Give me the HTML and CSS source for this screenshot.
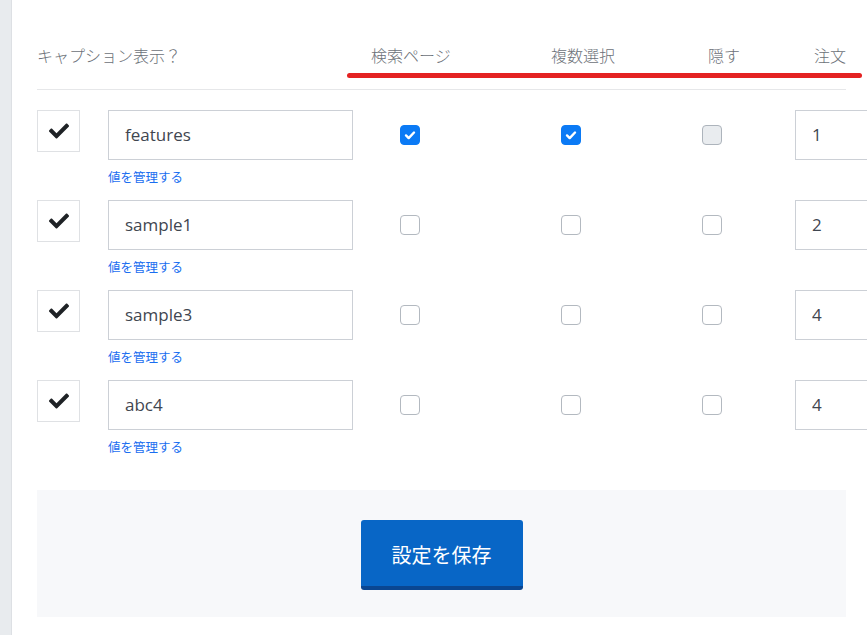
FILE: index.html
```html
<!DOCTYPE html>
<html lang="ja">
<head>
    <meta charset="UTF-8">
    <meta name="viewport" content="width=device-width, initial-scale=1.0">
    <title>カスタムフィールド設定</title>
    <link rel="stylesheet" href="styles.css">
</head>
<body>
    <div class="layout">
        <aside class="sidebar"></aside>

        <main class="panel">
            <!-- Column headings -->
            <div class="fields-head">
                <span>キャプション表示？</span>
                <span>検索ページ</span>
                <span>複数選択</span>
                <span>隠す</span>
                <span>注文</span>
                <span class="mark"></span>
            </div>

            <!-- Field rows -->
            <div class="field-row">
                <div class="caption-toggle">
                    <svg width="20" height="20" viewBox="0 0 512 512"><path d="M173.9 439.4l-166.4-166.4c-10-10-10-26.2 0-36.2l36.2-36.2c10-10 26.2-10 36.2 0L192 312.7 432.1 72.6c10-10 26.2-10 36.2 0l36.2 36.2c10 10 10 26.2 0 36.2l-294.4 294.4c-10 10-26.2 10-36.2 0z"/></svg>
                </div>
                <div class="name-cell">
                    <input type="text" class="name-input" value="features">
                    <a href="#" class="manage-link">値を管理する</a>
                </div>
                <div class="opt"><span class="tick on"><svg width="20" height="20" viewBox="0 0 20 20"><path d="M6 10.4l2.7 2.7 5.3-5.6"/></svg></span></div>
                <div class="opt"><span class="tick on"><svg width="20" height="20" viewBox="0 0 20 20"><path d="M6 10.4l2.7 2.7 5.3-5.6"/></svg></span></div>
                <div class="opt"><span class="tick off"></span></div>
                <div class="order-cell"><input type="text" class="order-input" value="1"></div>
            </div>

            <div class="field-row">
                <div class="caption-toggle">
                    <svg width="20" height="20" viewBox="0 0 512 512"><path d="M173.9 439.4l-166.4-166.4c-10-10-10-26.2 0-36.2l36.2-36.2c10-10 26.2-10 36.2 0L192 312.7 432.1 72.6c10-10 26.2-10 36.2 0l36.2 36.2c10 10 10 26.2 0 36.2l-294.4 294.4c-10 10-26.2 10-36.2 0z"/></svg>
                </div>
                <div class="name-cell">
                    <input type="text" class="name-input" value="sample1">
                    <a href="#" class="manage-link">値を管理する</a>
                </div>
                <div class="opt"><span class="tick"></span></div>
                <div class="opt"><span class="tick"></span></div>
                <div class="opt"><span class="tick"></span></div>
                <div class="order-cell"><input type="text" class="order-input" value="2"></div>
            </div>

            <div class="field-row">
                <div class="caption-toggle">
                    <svg width="20" height="20" viewBox="0 0 512 512"><path d="M173.9 439.4l-166.4-166.4c-10-10-10-26.2 0-36.2l36.2-36.2c10-10 26.2-10 36.2 0L192 312.7 432.1 72.6c10-10 26.2-10 36.2 0l36.2 36.2c10 10 10 26.2 0 36.2l-294.4 294.4c-10 10-26.2 10-36.2 0z"/></svg>
                </div>
                <div class="name-cell">
                    <input type="text" class="name-input" value="sample3">
                    <a href="#" class="manage-link">値を管理する</a>
                </div>
                <div class="opt"><span class="tick"></span></div>
                <div class="opt"><span class="tick"></span></div>
                <div class="opt"><span class="tick"></span></div>
                <div class="order-cell"><input type="text" class="order-input" value="4"></div>
            </div>

            <div class="field-row">
                <div class="caption-toggle">
                    <svg width="20" height="20" viewBox="0 0 512 512"><path d="M173.9 439.4l-166.4-166.4c-10-10-10-26.2 0-36.2l36.2-36.2c10-10 26.2-10 36.2 0L192 312.7 432.1 72.6c10-10 26.2-10 36.2 0l36.2 36.2c10 10 10 26.2 0 36.2l-294.4 294.4c-10 10-26.2 10-36.2 0z"/></svg>
                </div>
                <div class="name-cell">
                    <input type="text" class="name-input" value="abc4">
                    <a href="#" class="manage-link">値を管理する</a>
                </div>
                <div class="opt"><span class="tick"></span></div>
                <div class="opt"><span class="tick"></span></div>
                <div class="opt"><span class="tick"></span></div>
                <div class="order-cell"><input type="text" class="order-input" value="4"></div>
            </div>

            <div class="form-footer">
                <button type="button" class="save-btn">設定を保存</button>
            </div>
        </main>
    </div>
</body>
</html>
```

FILE: styles.css
```css
body {
    margin: 0;
    padding: 0;
    overflow: hidden;
    background-color: #ffffff;
    font-family: "Open Sans", "Noto Sans CJK JP", sans-serif;
    color: #444b55;
}

.layout {
    display: flex;
    height: 100vh;
}

.sidebar {
    width: 11px;
    flex-shrink: 0;
    background-color: #e8ebee;
    border-right: 1px solid #dde0e4;
}

.panel {
    flex: 1;
    min-width: 0;
    overflow: hidden;
    padding: 43px 0 0 25px;
}

.panel > div {
    width: 809px;
}

/* heading row */
.fields-head {
    position: relative;
    display: grid;
    grid-template-columns: 334px 180px 157px 106px auto;
    padding-bottom: 22px;
    border-bottom: 1px solid #e6e7e9;
    font-family: "Noto Sans CJK JP", sans-serif;
    font-weight: 300;
    font-size: 16px;
    line-height: 24px;
    color: #6c7178;
    white-space: nowrap;
}

/* red marker drawn over the headings */
.fields-head .mark {
    position: absolute;
    left: 310px;
    top: 30px;
    width: 515px;
    height: 5px;
    border-radius: 3px;
    background-color: #e42222;
}

.field-row {
    display: grid;
    grid-template-columns: 71px 245px 114px 208px 74px 1fr;
    align-items: start;
    margin-top: 20px;
}

.field-row + .field-row {
    margin-top: 14px;
}

.caption-toggle {
    width: 43px;
    height: 42px;
    box-sizing: border-box;
    border: 1px solid #dfe1e4;
    display: flex;
    align-items: center;
    justify-content: center;
}

.caption-toggle svg {
    fill: #1f2226;
    margin-top: -1px;
}

.name-cell {
    display: flex;
    flex-direction: column;
}

.name-input,
.order-input {
    height: 50px;
    box-sizing: border-box;
    border: 1px solid #ccd0d6;
    border-radius: 0;
    padding: 0 16px 1px;
    font-family: "Open Sans", sans-serif;
    font-size: 17px;
    color: #3f4650;
    outline: none;
}

.name-input {
    width: 245px;
}

.manage-link {
    margin-top: 8px;
    font-family: "Noto Sans CJK JP", sans-serif;
    font-size: 12.5px;
    line-height: 18px;
    color: #1a6ef0;
    text-decoration: none;
}

.opt {
    height: 50px;
    display: flex;
    align-items: center;
    justify-content: center;
}

.tick {
    width: 20px;
    height: 20px;
    box-sizing: border-box;
    border: 1px solid #b3b9c0;
    border-radius: 4px;
    background-color: #ffffff;
    display: flex;
}

.tick.on {
    border-color: #0b7af5;
    background-color: #0b7af5;
}

.tick.on svg {
    margin: -1px;
    fill: none;
    stroke: #ffffff;
    stroke-width: 2.4;
    stroke-linecap: round;
    stroke-linejoin: round;
}

.tick.off {
    background-color: #e9ecef;
    border-color: #adb4bc;
}

.order-cell {
    padding-left: 46px;
}

.order-input {
    width: 120px;
}

/* save area */
.form-footer {
    margin-top: 34px;
    padding: 30px 0 27px;
    background-color: #f7f8fa;
    text-align: center;
}

.save-btn {
    width: 162px;
    height: 70px;
    box-sizing: border-box;
    border: none;
    border-bottom: 4px solid #0a4691;
    border-radius: 3px;
    background-color: #0866c6;
    color: #ffffff;
    font-family: "Noto Sans CJK JP", sans-serif;
    font-size: 20px;
    padding: 2px 0 0;
    cursor: pointer;
}
```
